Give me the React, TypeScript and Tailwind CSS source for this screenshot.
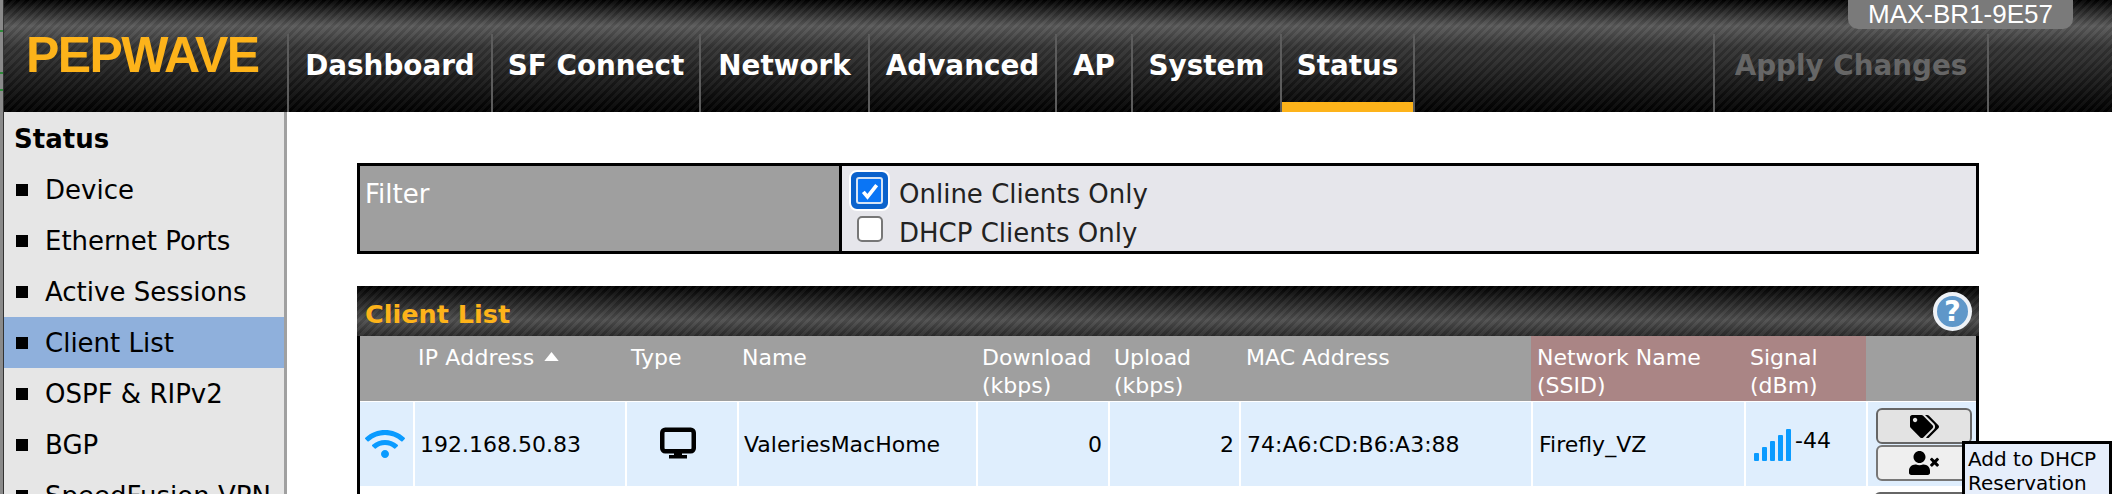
import React from "react";
import { FaWifi, FaTags, FaUserTimes } from "react-icons/fa";

const nav = [
  ["Dashboard", "w-[204px]"],
  ["SF Connect", "w-[208px]"],
  ["Network", "w-[169px]"],
  ["Advanced", "w-[187px]"],
  ["AP", "w-[76px]"],
  ["System", "w-[149px]"],
];
const side = ["Device", "Ethernet Ports", "Active Sessions", "Client List", "OSPF & RIPv2", "BGP", "SpeedFusion VPN"];

const Th = ({ className = "", children }: { className?: string; children?: React.ReactNode }) => (
  <div className={"pt-[8px] pl-[3px] text-white text-[22px] leading-[28px] " + className}>{children}</div>
);
const Td = ({ className = "", children }: { className?: string; children?: React.ReactNode }) => (
  <div className={"border-l-2 border-white flex items-center text-[22px] text-black " + className}>{children}</div>
);

export default function App() {
  return (
    <div className="relative flex h-[494px] w-[2112px] overflow-hidden bg-white font-['DejaVu_Sans',sans-serif]">
      <div className="w-[4px] shrink-0 border-r border-[#333] bg-[linear-gradient(180deg,#8a8a8a_0,#8a8a8a_30px,#2f8a3a_30px,#2f8a3a_32px,#8a8a8a_32px,#8a8a8a_72px,#2f8a3a_72px,#2f8a3a_74px,#8a8a8a_74px,#8a8a8a_89px,#2f8a3a_89px,#2f8a3a_91px,#8a8a8a_91px)]" />
      <div className="flex min-w-0 flex-1 flex-col">
        <header className="relative flex h-[112px] shrink-0 bg-[repeating-linear-gradient(135deg,rgba(255,255,255,0.045)_0,rgba(255,255,255,0.045)_3px,rgba(0,0,0,0.07)_3px,rgba(0,0,0,0.07)_6px),linear-gradient(180deg,#000_0,#5a5a5a_26px,#333_48px,#2c2c2c_60px,#000_112px)]">
          <div className="w-[283px] shrink-0 pl-[22px] pt-[25px] font-['Liberation_Sans',sans-serif] text-[50px] font-bold leading-[60px] tracking-[-1.6px] text-[#fdb31a]">
            PEPWAVE
          </div>
          {nav.map(([label, width]) => (
            <div key={label} className={"mt-[34px] flex h-[78px] items-start justify-center border-l-2 border-[#5c5c5c] pt-[15px] text-[27.8px] font-bold leading-[34px] text-white " + width}>
              {label}
            </div>
          ))}
          <div className="mt-[34px] flex h-[78px] w-[135px] items-start justify-center border-x-2 border-[#5c5c5c] pt-[15px] text-[27.8px] font-bold leading-[34px] text-white shadow-[inset_0_-10px_0_#fdb31a]">
            Status
          </div>
          <div className="w-[298px]" />
          <div className="mt-[34px] flex h-[78px] w-[276px] items-start justify-center border-x-2 border-[#5c5c5c] pt-[15px] text-[27.8px] font-bold leading-[34px] text-[#666]">
            Apply Changes
          </div>
          <div className="absolute right-[39px] top-0 flex h-[29px] w-[225px] items-center justify-center rounded-b-[10px] bg-[#7a7a7a] pb-[1px] font-['Liberation_Sans',sans-serif] text-[26px] leading-[28px] text-white">
            MAX-BR1-9E57
          </div>
        </header>
        <div className="flex min-h-0 flex-1">
          <aside className="w-[283px] shrink-0 border-r-[3px] border-[#a0a0a0] bg-[#e6e6e6]">
            <div className="h-[52px] pl-[10px] pt-[11px] text-[26px] font-bold leading-[32px] text-black">Status</div>
            {side.map((s) => (
              <div key={s} className={"flex h-[51px] items-center pl-[12px] text-[26px] text-black " + (s === "Client List" ? "bg-[#8fb0dc]" : "")}>
                <span className="mr-[17px] h-[12px] w-[12px] bg-black" />
                <span className="pt-[2px]">{s}</span>
              </div>
            ))}
          </aside>
          <main className="min-w-0 flex-1 pl-[70px] pt-[51px]">
            <div className="flex h-[91px] w-[1622px] border-[3px] border-black">
              <div className="w-[482px] border-r-[3px] border-black bg-[#9f9f9f] pl-[5px] pt-[13px] text-[26px] leading-[30px] text-white">Filter</div>
              <div className="flex-1 bg-[#e6e6eb] pl-[7px] pt-[3px] text-[26px] leading-[38px] text-[#222]">
                <div className="flex h-[43px] items-center">
                  <span className="flex h-[41px] w-[41px] items-center justify-center rounded-[8px] border-[2px] border-white bg-[#0a62cc]">
                    <span className="flex h-[27px] w-[27px] items-center justify-center rounded-[3px] border-[2px] border-[#d6e4f5] bg-[#0a75f5]">
                      <svg viewBox="0 0 24 24" className="h-[20px] w-[20px]"><path d="M4 13l5 6L20 5" fill="none" stroke="white" strokeWidth="4.5" /></svg>
                    </span>
                  </span>
                  <span className="ml-[9px] pt-[6px]">Online Clients Only</span>
                </div>
                <div className="flex h-[36px] items-center">
                  <span className="ml-[8px] h-[26px] w-[26px] -translate-y-[1px] rounded-[5px] border-2 border-[#777] bg-white" />
                  <span className="ml-[16px] pt-[5px]">DHCP Clients Only</span>
                </div>
              </div>
            </div>
            <section className="mt-[32px] w-[1622px] border-x-[3px] border-black">
              <div className="-mx-[3px] flex h-[50px] items-end justify-between bg-[repeating-linear-gradient(135deg,rgba(255,255,255,0.045)_0,rgba(255,255,255,0.045)_3px,rgba(0,0,0,0.07)_3px,rgba(0,0,0,0.07)_6px),linear-gradient(180deg,#000_0,#4f4f4f_34px,#2b2b2b_50px)] pb-[2px] pl-[8px] pr-[7px] font-bold leading-[32px] text-[#fdb31a]">
                <span className="pb-[4px] text-[25.5px]">Client List</span>
                <span className="mb-[3px] flex h-[39px] w-[39px] items-center justify-center rounded-full border-[4px] border-[#eef2f7] bg-[#5f97c9] text-[29px] font-bold leading-none text-white">?</span>
              </div>
              <div className="grid h-[65px] grid-cols-[53px_212px_112px_239px_132px_131px_292px_213px_122px_1fr] bg-[#9f9f9f]">
                <Th />
                <Th className="flex pl-[5px] tracking-[0.2px]">
                  IP Address
                  <svg viewBox="0 0 16 10" className="ml-[10px] mt-[8px] h-[9px] w-[15px]"><path d="M8 0l8 10H0z" fill="white" /></svg>
                </Th>
                <Th className="pl-[6px]">Type</Th>
                <Th className="pl-[5px]">Name</Th>
                <Th className="pl-[6px]">Download<br />(kbps)</Th>
                <Th className="pl-[6px]">Upload<br />(kbps)</Th>
                <Th className="pl-[7px]">MAC Address</Th>
                <Th className="bg-[#aa8585] pl-[6px]">Network Name<br />(SSID)</Th>
                <Th className="bg-[#aa8585] pl-[6px]">Signal<br />(dBm)</Th>
                <Th />
              </div>
              <div className="mt-[1px] grid h-[84px] grid-cols-[53px_212px_112px_239px_132px_131px_292px_213px_122px_1fr] bg-[#dfeefd]">
                <div className="flex items-center pl-[5px]"><FaWifi className="text-[40px] text-[#0a9bff]" /></div>
                <Td className="pl-[5px]">192.168.50.83</Td>
                <Td className="pb-[3px] pl-[33px]">
                  <svg viewBox="0 0 36 31" className="h-[32px] w-[36px]">
                    <rect x="2.25" y="2.25" width="31.5" height="21.5" rx="3" fill="none" stroke="black" strokeWidth="4.5" />
                    <path d="M14 25h8v3h-8zM9 27.5h18V31H9z" fill="black" />
                  </svg>
                </Td>
                <Td className="pl-[5px]">ValeriesMacHome</Td>
                <Td className="justify-end pr-[6px]">0</Td>
                <Td className="justify-end pr-[5px]">2</Td>
                <Td className="pl-[6px]">74:A6:CD:B6:A3:88</Td>
                <Td className="pl-[6px]">Firefly_VZ</Td>
                <Td className="pl-[8px] pb-[8px]">
                  <svg viewBox="0 0 38 32" className="mt-[10px] h-[32px] w-[38px]">
                    <rect x="0" y="24" width="5" height="8" rx="1" fill="#0a9bff" />
                    <rect x="8" y="18" width="5" height="14" rx="1" fill="#0a9bff" />
                    <rect x="16" y="12" width="5" height="20" rx="1" fill="#0a9bff" />
                    <rect x="24" y="6" width="5" height="26" rx="1" fill="#0a9bff" />
                    <rect x="32" y="0" width="5" height="32" rx="1" fill="#0a9bff" />
                  </svg>
                  <span className="ml-[3px]">-44</span>
                </Td>
                <Td className="flex-col pl-[8px] pr-[5px] pt-[6px]">
                  <button className="flex h-[36px] w-[96px] items-center justify-center rounded-[6px] border-2 border-[#666] bg-[#e3e3e3]"><FaTags className="text-[29px] text-black" /></button>
                  <button className="mt-[1px] flex h-[36px] w-[96px] items-center justify-center rounded-[6px] border-2 border-[#777] bg-[#efefef]"><FaUserTimes className="text-[30px] text-black" /></button>
                </Td>
              </div>
              <div className="flex h-[10px] justify-end pr-[6px] pt-[6px]">
                <div className="h-[20px] w-[96px] rounded-t-[6px] border-2 border-[#666] bg-[#e3e3e3]" />
              </div>
            </section>
          </main>
        </div>
      </div>
      <div className="absolute left-[1962px] top-[441px] h-[70px] w-[150px] border-[3px] border-black bg-[#e6eefb] pl-[3px] pt-[3px] text-[20px] leading-[24px] text-black">
        Add to DHCP<br />Reservation
      </div>
    </div>
  );
}
